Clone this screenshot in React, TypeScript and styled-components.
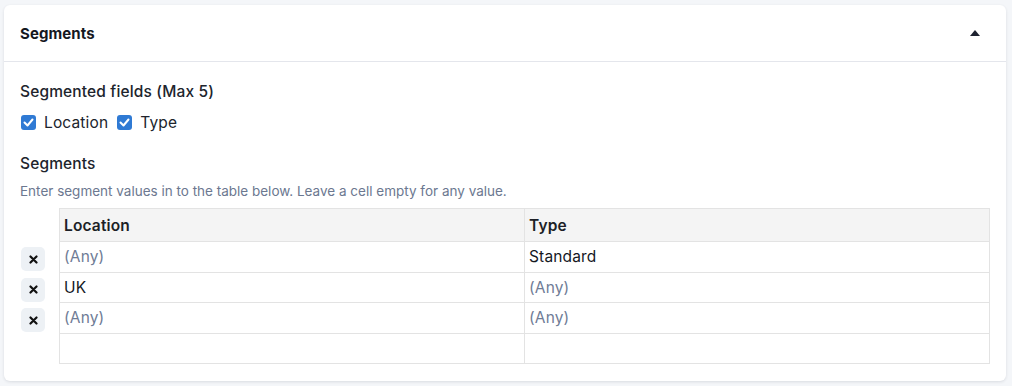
import React from "react";
import styled, { createGlobalStyle } from "styled-components";

const GlobalStyle = createGlobalStyle`
  html, body {
    margin: 0;
    background: #f4f6f9;
    font-family: Inter, "Noto Sans", sans-serif;
    color: #1f2430;
  }
`;

const Page = styled.div`
  padding: 5px 6px 6px 4px;
`;

const Card = styled.section`
  background: #fff;
  border-radius: 6px;
  box-shadow: 0 1px 3px rgba(30, 40, 60, 0.12);
`;

const Header = styled.div`
  height: 56px;
  padding: 0 26px 0 16px;
  display: flex;
  align-items: center;
  justify-content: space-between;
  border-bottom: 1px solid #e4e6ec;
`;

const Title = styled.h3`
  margin: 0;
  font-size: 15px;
  font-weight: 700;
  letter-spacing: 0.1px;
  color: #15181f;
`;

const Caret = styled.span`
  width: 0;
  height: 0;
  border-left: 5px solid transparent;
  border-right: 5px solid transparent;
  border-bottom: 6px solid #1d2230;
`;

const Body = styled.div`
  padding: 19px 16px 17px 16px;
`;

const Label = styled.div`
  font-size: 15.5px;
  font-weight: 500;
  line-height: 22px;
  letter-spacing: 0.15px;
  color: #20242c;
`;

const CheckRow = styled.div`
  display: flex;
  align-items: center;
  gap: 8px;
  margin-top: 10px;
  margin-bottom: 21px;
`;

const Check = styled.label`
  display: flex;
  align-items: center;
  gap: 8px;
  font-size: 15.5px;
  letter-spacing: 0.15px;
  color: #20242c;
`;

const Box = styled.span`
  width: 15px;
  height: 15px;
  margin-left: 1px;
  border-radius: 3px;
  background: #2f7ad4;
  display: flex;
  align-items: center;
  justify-content: center;
`;

const Hint = styled.div`
  font-size: 13.5px;
  color: #6c7890;
  margin-top: 8px;
  margin-bottom: 9px;
`;

const TableWrap = styled.div`
  display: grid;
  grid-template-columns: 39px 1fr;
`;

const Gutter = styled.div`
  display: flex;
  flex-direction: column;
  padding-top: 36px;
`;

const GutterCell = styled.div`
  height: 30.5px;
  display: flex;
  align-items: center;
`;

const RemoveButton = styled.button`
  width: 24px;
  height: 24px;
  margin-left: 1px;
  border: none;
  border-radius: 5px;
  background: #edf1f5;
  display: flex;
  align-items: center;
  justify-content: center;
  padding: 0;
  cursor: pointer;
`;

const Table = styled.table`
  width: 100%;
  border-collapse: collapse;
  table-layout: fixed;
  border: 1px solid #e3e3e3;
`;

const Th = styled.th`
  height: 32px;
  padding: 0 4px;
  text-align: left;
  font-size: 15.5px;
  font-weight: 600;
  letter-spacing: 0.15px;
  background: #f4f4f4;
  border: 1px solid #e3e3e3;
  color: #1c1f26;
`;

const Td = styled.td<{ $empty?: boolean }>`
  height: 29.5px;
  padding: 0 4px;
  font-size: 15.5px;
  letter-spacing: 0.15px;
  border: 1px solid #e3e3e3;
  color: ${(p) => (p.$empty ? "#6f7c96" : "#15181f")};
`;

const rows: [string, string][] = [
  ["", "Standard"],
  ["UK", ""],
  ["", ""],
];

const Tick = () => (
  <svg width="11" height="9" viewBox="0 0 11 9">
    <path d="M1.5 4.5l3 3 5-6" fill="none" stroke="#fff" strokeWidth="2" strokeLinecap="round" strokeLinejoin="round" />
  </svg>
);

const Cross = () => (
  <svg width="9" height="9" viewBox="0 0 9 9">
    <path d="M1.5 1.5l6 6M7.5 1.5l-6 6" stroke="#111" strokeWidth="2.2" strokeLinecap="round" />
  </svg>
);

export default function App() {
  return (
    <Page>
      <GlobalStyle />
      <Card>
        <Header>
          <Title>Segments</Title>
          <Caret />
        </Header>
        <Body>
          <Label>Segmented fields (Max 5)</Label>
          <CheckRow>
            <Check>
              <Box><Tick /></Box>
              Location
            </Check>
            <Check>
              <Box><Tick /></Box>
              Type
            </Check>
          </CheckRow>
          <Label>Segments</Label>
          <Hint>Enter segment values in to the table below. Leave a cell empty for any value.</Hint>
          <TableWrap>
            <Gutter>
              {rows.map((_, i) => (
                <GutterCell key={i}>
                  <RemoveButton aria-label="Remove row"><Cross /></RemoveButton>
                </GutterCell>
              ))}
            </Gutter>
            <Table>
              <thead>
                <tr>
                  <Th>Location</Th>
                  <Th>Type</Th>
                </tr>
              </thead>
              <tbody>
                {rows.map((r, i) => (
                  <tr key={i}>
                    {r.map((v, j) => (
                      <Td key={j} $empty={!v}>{v || "(Any)"}</Td>
                    ))}
                  </tr>
                ))}
                <tr>
                  <Td />
                  <Td />
                </tr>
              </tbody>
            </Table>
          </TableWrap>
        </Body>
      </Card>
    </Page>
  );
}
